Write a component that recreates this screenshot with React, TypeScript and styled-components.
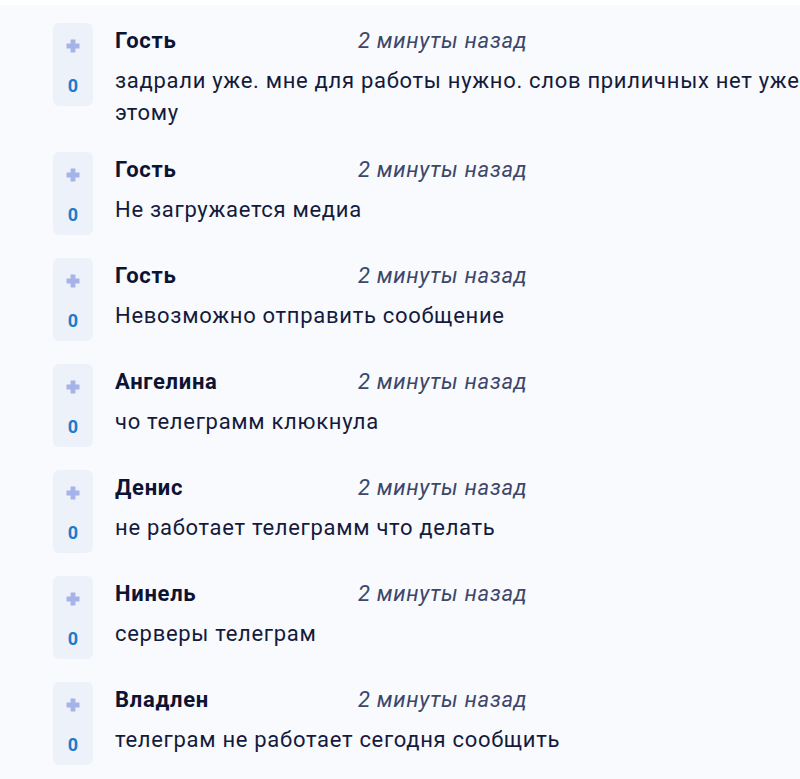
import styled, { createGlobalStyle } from "styled-components";

const GlobalStyle = createGlobalStyle`
  html, body {
    margin: 0;
    padding: 0;
    background: #ffffff;
    font-family: Roboto, "Noto Sans", sans-serif;
    overflow: hidden;
  }
`;

interface IComment {
  author: string;
  time: string;
  text: string;
  votes: number;
}

const comments: IComment[] = [
  {
    author: "Гость",
    time: "2 минуты назад",
    text: "задрали уже. мне для работы нужно. слов приличных нет уже по этому",
    votes: 0,
  },
  { author: "Гость", time: "2 минуты назад", text: "Не загружается медиа", votes: 0 },
  { author: "Гость", time: "2 минуты назад", text: "Невозможно отправить сообщение", votes: 0 },
  { author: "Ангелина", time: "2 минуты назад", text: "чо телеграмм клюкнула", votes: 0 },
  { author: "Денис", time: "2 минуты назад", text: "не работает телеграмм что делать", votes: 0 },
  { author: "Нинель", time: "2 минуты назад", text: "серверы телеграм", votes: 0 },
  { author: "Владлен", time: "2 минуты назад", text: "телеграм не работает сегодня сообщить", votes: 0 },
];

function PlusIcon() {
  return (
    <svg width="16" height="16" viewBox="0 0 16 16">
      <path d="M5.6 1.5h4.8v4.1h4.1v4.8h-4.1v4.1H5.6v-4.1H1.5V5.6h4.1z" fill="#a5b3e8" />
    </svg>
  );
}

export default function App() {
  return (
    <>
      <GlobalStyle />
      <Stl.Panel>
        {comments.map((item, i) => (
          <Stl.Item key={i}>
            <Stl.Vote>
              <Stl.VoteButton type="button">
                <PlusIcon />
              </Stl.VoteButton>
              <Stl.Count>{item.votes}</Stl.Count>
            </Stl.Vote>
            <Stl.Body>
              <Stl.Header>
                <Stl.Author>{item.author}</Stl.Author>
                <Stl.Time>{item.time}</Stl.Time>
              </Stl.Header>
              <Stl.Text>{item.text}</Stl.Text>
            </Stl.Body>
          </Stl.Item>
        ))}
      </Stl.Panel>
    </>
  );
}

const Stl = {
  Panel: styled.div`
    margin-top: 5px;
    min-height: 774px;
    background: #f8fafd;
    padding: 18px 0 0 53px;
    box-sizing: border-box;
    display: flex;
    flex-direction: column;
    gap: 23px;
    width: 1000px;
  `,
  Item: styled.div`
    display: flex;
    align-items: flex-start;
    gap: 22px;
  `,
  Vote: styled.div`
    flex: 0 0 40px;
    height: 83px;
    background: #edf2fa;
    border-radius: 6px;
    display: flex;
    flex-direction: column;
    align-items: center;
    padding-top: 15px;
    box-sizing: border-box;
  `,
  VoteButton: styled.button`
    border: 0;
    background: none;
    padding: 0;
    width: 16px;
    height: 16px;
    display: flex;
    cursor: pointer;
  `,
  Count: styled.span`
    margin-top: 21px;
    font-size: 18px;
    font-weight: 700;
    color: #1f7acc;
    line-height: 22px;
  `,
  Body: styled.div`
    display: flex;
    flex-direction: column;
    gap: 7px;
    width: 750px;
  `,
  Header: styled.div`
    display: grid;
    grid-template-columns: 243px auto;
    align-items: baseline;
    line-height: 35px;
  `,
  Author: styled.span`
    font-size: 22px;
    font-weight: 700;
    letter-spacing: 0.7px;
    color: #0d1333;
  `,
  Time: styled.span`
    font-size: 22px;
    font-style: italic;
    letter-spacing: 0.7px;
    color: #3c4769;
  `,
  Text: styled.p`
    margin: 0;
    font-size: 22px;
    line-height: 32px;
    letter-spacing: 0.7px;
    color: #151a3c;
  `,
};
